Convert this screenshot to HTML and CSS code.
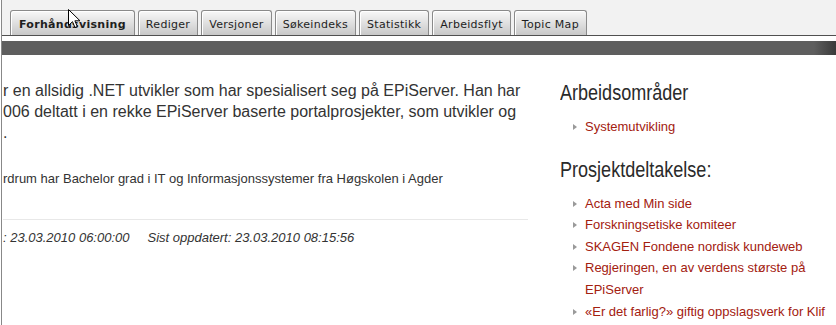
FILE: index.html
```html
<!DOCTYPE html>
<html lang="no">
<head>
<meta charset="utf-8">
<title>Forhåndsvisning</title>
<link rel="stylesheet" href="styles.css">
</head>
<body>
<div class="page">
  <nav class="tabbar">
    <a class="tab active">Forhåndsvisning</a>
    <a class="tab">Rediger</a>
    <a class="tab">Versjoner</a>
    <a class="tab">Søkeindeks</a>
    <a class="tab">Statistikk</a>
    <a class="tab">Arbeidsflyt</a>
    <a class="tab">Topic Map</a>
  </nav>
  <div class="toolbar"></div>
  <div class="content">
    <main class="main">
      <p class="bio">r en allsidig .NET utvikler som har spesialisert seg på EPiServer. Han har<br>006 deltatt i en rekke EPiServer baserte portalprosjekter, som utvikler og<br>.</p>
      <p class="edu">rdrum har Bachelor grad i IT og Informasjonssystemer fra Høgskolen i Agder</p>
      <div class="meta"><span>: 23.03.2010 06:00:00</span><span>Sist oppdatert: 23.03.2010 08:15:56</span></div>
    </main>
    <aside class="side">
      <h2>Arbeidsområder</h2>
      <ul class="links">
        <li><a href="#">Systemutvikling</a></li>
      </ul>
      <h2>Prosjektdeltakelse:</h2>
      <ul class="links">
        <li><a href="#">Acta med Min side</a></li>
        <li><a href="#">Forskningsetiske komiteer</a></li>
        <li><a href="#">SKAGEN Fondene nordisk kundeweb</a></li>
        <li><a href="#">Regjeringen, en av verdens største på EPiServer</a></li>
        <li><a href="#">«Er det farlig?» giftig oppslagsverk for Klif</a></li>
      </ul>
    </aside>
  </div>
</div>
<svg class="cursor" width="13" height="20" viewBox="0 0 13 20"><path d="M0.5 0.5 L0.5 16.5 L4.5 12.7 L7 18.5 L9.3 17.5 L6.9 11.8 L12 11.8 Z" fill="#fff" stroke="#000" stroke-width="1" stroke-linejoin="miter"/></svg>
</body>
</html>
```
FILE: styles.css
```css
html, body {
  margin: 0;
  padding: 0;
  background: #fff;
}
body {
  overflow: hidden;
}
.page {
  margin-left: 1px;
  border-left: 1px solid #888;
  min-height: 100vh;
  font-family: "Liberation Sans", Arial, sans-serif;
  color: #333;
}
.tabbar {
  display: flex;
  gap: 3px;
  background: #f2f2f2;
  padding: 10px 0 0 8px;
  border-bottom: 1px solid #505050;
  height: 25px;
}
.tab {
  font-family: "DejaVu Sans", Verdana, sans-serif;
  font-size: 11px;
  line-height: 18px;
  letter-spacing: 0.3px;
  color: #1e1e1e;
  padding: 5px 7px 1px;
  border: 1px solid #8a8a8a;
  border-bottom: 0;
  border-radius: 3px 3px 0 0;
  background: linear-gradient(#f8f8f8, #c8c8c8);
  box-shadow: inset 1px 1px 0 #fff;
  white-space: nowrap;
  cursor: default;
}
.tab.active {
  font-weight: bold;
  padding: 5px 8px 1px;
}
.toolbar {
  margin-top: 5px;
  height: 14px;
  background: linear-gradient(to right, #5e5e5e calc(100% - 22px), #3a3a3a);
}
.content {
  display: flex;
  padding-left: 1px;
}
.main {
  width: 525px;
  flex: none;
}
.bio {
  margin: 25px 0 0;
  font-size: 16px;
  line-height: 21px;
  white-space: nowrap;
}
.edu {
  margin: 26px 0 0;
  font-size: 13px;
  line-height: 20px;
  white-space: nowrap;
}
.meta {
  margin-top: 30px;
  border-top: 1px solid #e8e8e8;
  padding-top: 8px;
  display: flex;
  gap: 18px;
  font-size: 13px;
  line-height: 20px;
  font-style: italic;
  color: #333;
}
.side {
  flex: 1;
  margin-left: 32px;
  padding-top: 6px;
}
.side h2 {
  font-family: "Liberation Sans", Arial, sans-serif;
  font-weight: normal;
  font-size: 22px;
  line-height: 26px;
  color: #2a2a2a;
  margin: 19px 0 10px;
  transform: scaleX(0.82);
  transform-origin: 0 50%;
  white-space: nowrap;
}
.links {
  list-style: none;
  margin: 0;
  padding: 0;
}
.links li {
  font-size: 13px;
  line-height: 21.6px;
  padding-left: 25px;
}
.links li::before {
  content: "";
  display: inline-block;
  width: 0;
  height: 0;
  margin-left: -12px;
  margin-right: 8px;
  border-left: 4px solid #9a9a9a;
  border-top: 3.5px solid transparent;
  border-bottom: 3.5px solid transparent;
  vertical-align: 1px;
}
.links a {
  color: #a3200f;
  text-decoration: none;
}
.cursor {
  position: absolute;
  left: 68px;
  top: 9px;
}
```
